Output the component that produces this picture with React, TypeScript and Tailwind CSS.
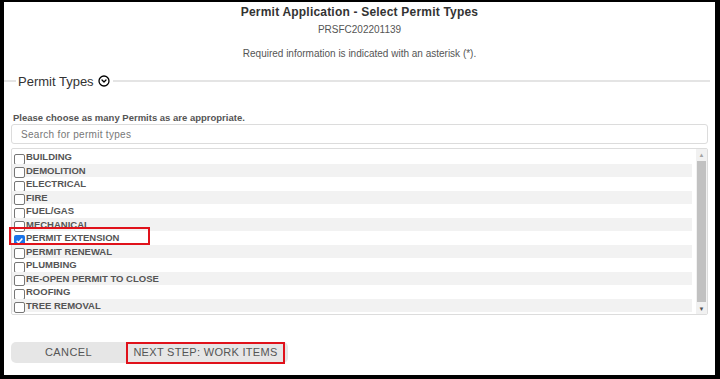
import {CircleChevronDown} from 'lucide-react';

const permits = [
  'BUILDING',
  'DEMOLITION',
  'ELECTRICAL',
  'FIRE',
  'FUEL/GAS',
  'MECHANICAL',
  'PERMIT EXTENSION',
  'PERMIT RENEWAL',
  'PLUMBING',
  'RE-OPEN PERMIT TO CLOSE',
  'ROOFING',
  'TREE REMOVAL',
];

function PermitRow({label, index}: {label: string; index: number}) {
  const checked = label === 'PERMIT EXTENSION';
  return (
    <div className={`relative flex items-center h-[13.5px] pl-[2px] ${index % 2 === 1 ? 'bg-[#f2f2f2]' : ''}`}>
      {checked ? (
        <span className="mt-[5px] w-[11px] h-[11px] rounded-[2px] bg-[#1a73e8] flex items-center justify-center shrink-0">
          <svg viewBox="0 0 12 12" className="w-[9px] h-[9px]">
            <path d="M2.2 6.3 L4.8 8.8 L9.8 3.2" fill="none" stroke="white" strokeWidth="2" />
          </svg>
        </span>
      ) : (
        <span className="mt-[5px] w-[11px] h-[11px] rounded-[2px] border border-[#767676] bg-white shrink-0" />
      )}
      <span className="ml-px text-[9.5px] font-bold text-[#555] leading-none">{label}</span>
      {checked && (
        <span className="absolute left-[-3px] top-[-4px] w-[141px] h-[18px] border-2 border-[#e0121b]" />
      )}
    </div>
  );
}

export default function App() {
  return (
    <div className="bg-black pt-[2px] pl-[4px] pr-[5px] pb-[4px] w-[720px] h-[379px]" style={{fontFamily: '"Liberation Sans", Arial, sans-serif'}}>
      <div className="bg-white h-full flex flex-col">
        <div className="text-center text-[12px] font-bold text-[#333] tracking-[0.2px] mt-[3px] leading-[15px]">
          Permit Application - Select Permit Types
        </div>
        <div className="text-center text-[10px] text-[#555] mt-[4px] leading-[12px]">
          PRSFC202201139
        </div>
        <div className="text-center text-[10px] text-[#555] mt-[12px] leading-[12px]">
          Required information is indicated with an asterisk (*).
        </div>
        <div className="flex items-center mt-[13px] h-[16px]">
          <div className="w-[12px] h-[2px] bg-[#e4e4e4]" />
          <span className="ml-[2px] text-[13px] text-[#333] leading-none">Permit Types</span>
          <CircleChevronDown className="ml-[4px] w-[12px] h-[12px] text-black" strokeWidth={2.6} />
          <div className="ml-[3px] mr-[5px] flex-1 h-[2px] bg-[#e4e4e4]" />
        </div>
        <div className="ml-[9px] mt-[23px] text-[9.5px] font-bold text-[#555] leading-[12px]">
          Please choose as many Permits as are appropriate.
        </div>
        <div className="ml-[7px] mr-[7px] mt-0 h-[20px] border border-[#dcdcdc] rounded-[3px] flex items-center pl-[9px] text-[10px] text-[#777] tracking-[0.3px]">
          Search for permit types
        </div>
        <div className="ml-[7px] mr-[7px] mt-[4px] h-[167px] border border-[#dcdcdc] rounded-[2px] flex">
          <div className="flex-1 pt-[1px] pr-[4px]">
            {permits.map((p, i) => (
              <PermitRow key={p} label={p} index={i} />
            ))}
          </div>
          <div className="w-[11px] flex flex-col items-center bg-[#f1f1f1]">
            <div className="h-[11px] flex items-center justify-center text-[6px] text-[#a3a3a3] leading-none">▲</div>
            <div className="flex-1 w-[9px] bg-[#c1c1c1] my-[1px]" />
            <div className="h-[11px] flex items-center justify-center text-[6px] text-[#505050] leading-none">▼</div>
          </div>
        </div>
        <div className="ml-[7px] mt-[27px] flex h-[21px]">
          <div className="w-[115px] bg-[#e6e6e6] rounded-l-[5px] flex items-center justify-center text-[11px] text-[#555] tracking-[0.4px]">
            CANCEL
          </div>
          <div className="w-[162px] bg-[#e6e6e6] rounded-r-[5px] flex items-center">
            <div className="w-[159px] h-[22px] border-2 border-[#e0121b] flex items-center justify-center text-[11px] text-[#555] tracking-[0.3px]">
              NEXT STEP: WORK ITEMS
            </div>
          </div>
        </div>
      </div>
    </div>
  );
}
